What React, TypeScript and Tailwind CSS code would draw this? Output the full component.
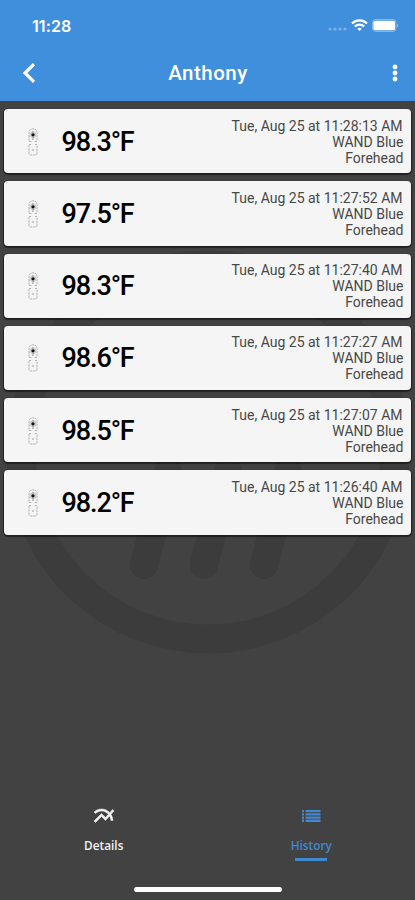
type Reading = { temp: string; time: string };

const readings: Reading[] = [
  { temp: "98.3°F", time: "Tue, Aug 25 at 11:28:13 AM" },
  { temp: "97.5°F", time: "Tue, Aug 25 at 11:27:52 AM" },
  { temp: "98.3°F", time: "Tue, Aug 25 at 11:27:40 AM" },
  { temp: "98.6°F", time: "Tue, Aug 25 at 11:27:27 AM" },
  { temp: "98.5°F", time: "Tue, Aug 25 at 11:27:07 AM" },
  { temp: "98.2°F", time: "Tue, Aug 25 at 11:26:40 AM" },
];

function StatusBar() {
  return (
    <div className="flex h-[50px] items-center justify-between pl-8 pr-4 text-white">
      <span className="pt-px font-['Inter',sans-serif] text-[16px] leading-none font-semibold tracking-[0.1px]">11:28</span>
      <div className="flex items-center">
        <svg width="20" height="4" viewBox="0 0 20 4" className="mt-2 fill-white opacity-30">
          <circle cx="2" cy="2" r="1.6" />
          <circle cx="7" cy="2" r="1.6" />
          <circle cx="12" cy="2" r="1.6" />
          <circle cx="17" cy="2" r="1.6" />
        </svg>
        <svg width="17" height="13" viewBox="0 0 17 13" className="ml-[3px]" fill="none" stroke="white" strokeWidth="2.2">
          <path d="M1 4.6C5 .4 12 .4 16 4.6" />
          <path d="M3.8 7.5c2.7-2.6 6.7-2.6 9.4 0" />
          <path d="M6.2 9.7c1.3-1.2 3.3-1.2 4.6 0L8.5 12Z" fill="white" stroke="none" />
        </svg>
        <svg width="27" height="13" viewBox="0 0 27 13" className="ml-1">
          <rect x=".6" y=".6" width="23.3" height="11.8" rx="3" fill="none" stroke="white" strokeOpacity=".4" />
          <rect x="1.4" y="1.8" width="21.6" height="9.4" rx="1.8" fill="white" />
          <path d="M25 4.5v4c1.6-.5 1.6-3.5 0-4Z" fill="white" fillOpacity=".45" />
        </svg>
      </div>
    </div>
  );
}

function Header() {
  return (
    <header className="relative h-[101px] shrink-0 bg-[#408fdd]">
      <StatusBar />
      <div className="grid h-[46px] grid-cols-[1fr_auto_1fr] items-center pl-[22px] pr-4">
        <svg width="14" height="20" viewBox="0 0 14 20" fill="none" stroke="white" strokeWidth="3.2">
          <path d="M12 1.2 3 10l9 8.8" />
        </svg>
        <h1 className="-ml-[5px] text-[20.5px] leading-none font-medium tracking-[0.5px] text-white">Anthony</h1>
        <svg width="8" height="18" viewBox="0 0 8 18" fill="white" className="justify-self-end">
          <circle cx="4" cy="3" r="2.4" />
          <circle cx="4" cy="9" r="2.4" />
          <circle cx="4" cy="15" r="2.4" />
        </svg>
      </div>
    </header>
  );
}

function Thermometer() {
  return (
    <svg width="12" height="30" viewBox="0 0 12 30" fill="none" stroke="#a5a5a5" strokeWidth=".8">
      <path d="M2 13.8V5.5C2 .5 10 .5 10 5.5v8.3" strokeDasharray="2.5 .7" />
      <path d="M2 14.5h2.3M7.7 14.5H10M2 17.5h2M8 17.5h2" />
      <path d="M2 18v8q0 2 2 2h4q2 0 2-2v-8" strokeDasharray="2.5 .7" />
      <circle cx="6" cy="7.8" r="3.3" fill="#ccc" stroke="none" />
      <circle cx="6" cy="7.8" r="1.6" fill="#111" stroke="none" />
      <path d="M6 4v1.5M6 10v3" stroke="#777" />
      <path d="M5 23h2" stroke="#888" />
    </svg>
  );
}

function ReadingCard({ temp, time }: Reading) {
  return (
    <li className="flex h-[64.25px] items-center rounded-[4px] bg-[#f5f5f5] pl-[23px] pr-[7.5px] pt-px shadow-[0_1px_1px_1px_rgba(0,0,0,0.5)]">
      <Thermometer />
      <span className="ml-[22.5px] pt-px text-[27px] leading-none font-medium tracking-[-1.1px] text-black">{temp}</span>
      <div className="ml-auto text-right text-[14px] leading-4 text-[#484848]">
        <p className="pr-px">{time}</p>
        <p>WAND Blue</p>
        <p>Forehead</p>
      </div>
    </li>
  );
}

function Watermark() {
  return (
    <svg
      width="415"
      height="410"
      viewBox="0 0 415 410"
      fill="none"
      stroke="#3c3c3c"
      strokeWidth="29"
      strokeLinecap="round"
      className="absolute left-0 top-[247px]"
    >
      <circle cx="208" cy="205" r="187" />
      <path d="M144 318 168 225M204 318l24-93M264 318l24-93" strokeWidth="28" />
    </svg>
  );
}

function TabBar() {
  return (
    <nav className="mt-auto grid h-24 grid-cols-2 font-['Open_Sans',sans-serif] text-[11.8px] leading-4 font-semibold">
      <a className="flex flex-col items-center text-[#f2f2f2]">
        <svg width="24" height="24" viewBox="0 0 24 24" fill="currentColor" stroke="currentColor" strokeWidth=".5">
          <path d="m22 6.92-1.41-1.41-2.85 3.21C15.68 6.4 12.83 5 9.61 5 6.72 5 4.07 6.16 2 8l1.42 1.42C5.12 7.93 7.27 7 9.61 7c2.74 0 5.09 1.26 6.77 3.24l-2.88 3.24-4-4L2 16.99l1.5 1.5 6-6.01 4 4 4.05-4.55c.75 1.35 1.25 2.9 1.44 4.55H21c-.22-2.3-.95-4.39-2.04-6.14L22 6.92Z" />
        </svg>
        <span className="mt-[9px]">Details</span>
      </a>
      <a className="flex flex-col items-center text-[#4088d0]">
        <svg width="20" height="24" viewBox="0 0 20 24" fill="currentColor">
          <path d="M1 6h2v2.3H1zM4.5 6h15v2.3h-15zM1 9.2h2v2.3H1zM4.5 9.2h15v2.3h-15zM1 12.4h2v2.3H1zM4.5 12.4h15v2.3h-15zM1 15.6h2v2.3H1zM4.5 15.6h15v2.3h-15z" />
        </svg>
        <span className="mt-[9px]">History</span>
        <span className="mt-[5px] h-[3px] w-8 bg-current" />
      </a>
    </nav>
  );
}

export default function App() {
  return (
    <div className="relative flex h-[900px] w-[415px] flex-col overflow-hidden bg-[#424242] font-['Roboto',sans-serif]">
      <Watermark />
      <Header />
      <ul className="relative flex flex-col gap-2 px-1 pt-2">
        {readings.map((r) => (
          <ReadingCard key={r.time} {...r} />
        ))}
      </ul>
      <TabBar />
      <div className="mb-2 ml-[134px] mt-[-13px] h-[5px] w-[148px] shrink-0 rounded-full bg-white" />
    </div>
  );
}
